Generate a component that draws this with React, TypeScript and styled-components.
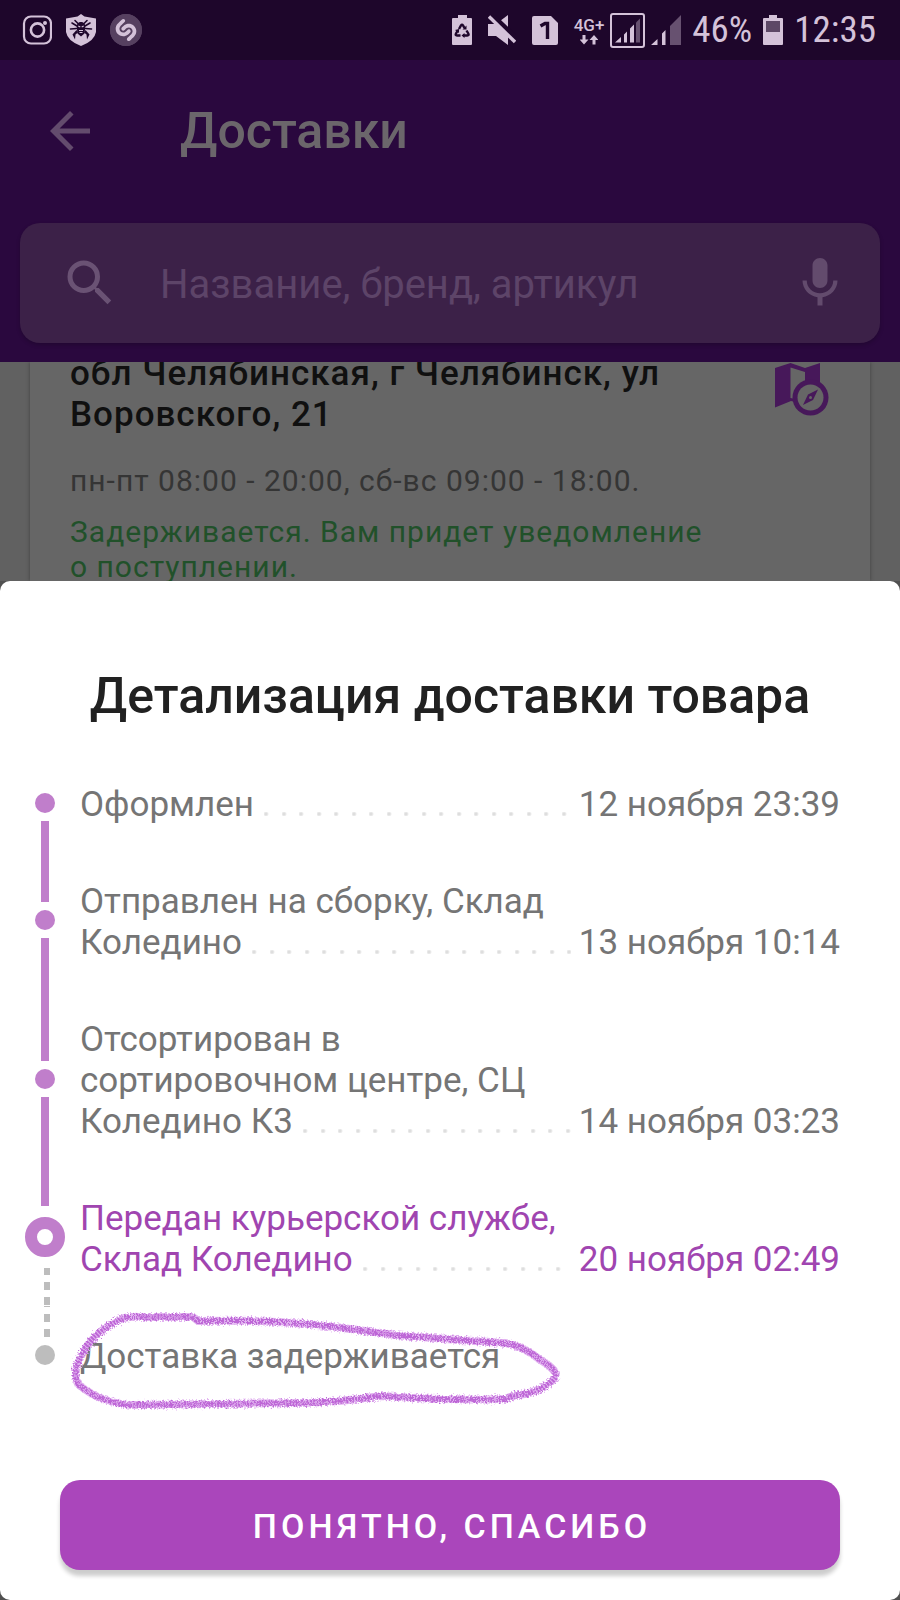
import React from 'react';
import styled, { createGlobalStyle, css } from 'styled-components';
import { MdArrowBack, MdMic, MdSearch } from 'react-icons/md';
import { SiShazam } from 'react-icons/si';

const GlobalStyle = createGlobalStyle`
  * { box-sizing: border-box; }
  body { margin: 0; background: #505050; font-family: Roboto, "Noto Sans", sans-serif; }
  h1, h2, h3, p, ol { margin: 0; padding: 0; }
  button, input { font-family: inherit; }
`;

const Screen = styled.div`
  display: flex;
  flex-direction: column;
  min-height: 100vh;
`;

const StatusBar = styled.div`
  display: flex;
  align-items: center;
  justify-content: space-between;
  height: 60px;
  padding: 0 24px 0 22px;
  background: #1e062b;
  color: #d4c2d9;
`;

const StatusGroup = styled.div<{ $gap: number }>`
  display: flex;
  align-items: center;
  gap: ${({ $gap }) => $gap}px;
`;

const StatusText = styled.span`
  font-family: "Roboto Condensed", Roboto, sans-serif;
  font-size: 37px;
  line-height: 40px;
`;

const NetworkType = styled.div`
  display: flex;
  flex-direction: column;
  align-items: center;
  font-size: 17px;
  font-weight: 500;
  line-height: 20px;
`;

const Header = styled.header`
  display: flex;
  flex-direction: column;
  gap: 57px;
  padding: 36px 20px 19px;
  background: #2a083e;
`;

const TitleRow = styled.div`
  display: flex;
  align-items: center;
  gap: 80px;
  height: 70px;
  padding-left: 20px;
`;

const IconButton = styled.button`
  display: flex;
  padding: 0;
  border: 0;
  background: none;
  color: #634b6d;
`;

const PageTitle = styled.h1`
  color: #6b666b;
  font-size: 50px;
  font-weight: 500;
  line-height: 60px;
`;

const SearchBox = styled.label`
  display: flex;
  align-items: center;
  gap: 40px;
  height: 120px;
  padding: 0 30px 0 40px;
  border-radius: 20px;
  background: #3c2148;
  box-shadow: 0 2px 4px rgba(0, 0, 0, 0.2);
  color: #6a5274;
`;

const SearchInput = styled.input`
  flex: 1;
  min-width: 0;
  padding: 4px 0 0;
  border: 0;
  outline: 0;
  background: none;
  color: #6a5274;
  font-size: 40px;
  line-height: 48px;
  &::placeholder { color: #5d4468; opacity: 1; }
`;

const Deliveries = styled.main`
  flex: 1 0 219px;
  height: 219px;
  overflow: hidden;
  padding: 0 30px;
  background: #616161;
`;

const DeliveryCard = styled.article`
  display: flex;
  align-items: flex-start;
  justify-content: space-between;
  height: 100%;
  padding: 0 40px;
  background: #666;
  box-shadow: 0 0 4px rgba(0, 0, 0, 0.35);
`;

const CardText = styled.div`
  display: flex;
  flex-direction: column;
  max-width: 640px;
  margin-top: -9px;
`;

const Address = styled.h2`
  color: #101010;
  font-size: 35px;
  font-weight: 500;
  line-height: 41px;
  letter-spacing: 1px;
`;

const Hours = styled.p`
  margin-top: 28px;
  color: #353535;
  font-size: 30px;
  line-height: 35px;
  letter-spacing: 1px;
`;

const DelayNote = styled(Hours)`
  margin-top: 16px;
  color: #21512a;
`;

const Sheet = styled.section`
  display: flex;
  flex-direction: column;
  padding: 85px 0 30px;
  border-radius: 10px;
  background: #fff;
`;

const SheetTitle = styled.h2`
  color: #212121;
  font-size: 50px;
  font-weight: 500;
  line-height: 60px;
  text-align: center;
`;

const Timeline = styled.ol`
  margin: 28px 60px 77px 25px;
  list-style: none;
`;

const Step = styled.li<{ $active?: boolean }>`
  display: flex;
  gap: 15px;
  color: ${({ $active }) => ($active ? '#a045b0' : '#757575')};
`;

const Rail = styled.div`
  display: flex;
  flex-direction: column;
  align-items: center;
  gap: 8px;
  width: 40px;
`;

type StepState = 'done' | 'current' | 'pending';
type LineKind = 'none' | 'solid' | 'dashDown' | 'dashUp';

const lineStyles = {
  none: css``,
  solid: css`background: #c07ecb;`,
  dashDown: css`
    width: 6px;
    margin-left: 4px;
    background: repeating-linear-gradient(
      to top,
      transparent 0 1px,
      #bdbdbd 1px 9px,
      transparent 9px 15px
    );
  `,
  dashUp: css`
    width: 6px;
    margin-left: 4px;
    background: repeating-linear-gradient(to top, #bdbdbd 0 8px, transparent 8px 15px);
  `,
};

const Line = styled.span<{ $kind: LineKind }>`
  flex: 1;
  width: 8px;
  ${({ $kind }) => lineStyles[$kind]}
`;

const Dot = styled.span<{ $state: StepState }>`
  width: 20px;
  height: 20px;
  border-radius: 50%;
  background: ${({ $state }) => ($state === 'pending' ? '#bdbdbd' : '#c07ecb')};
  ${({ $state }) =>
    $state === 'current' &&
    css`
      width: 40px;
      height: 40px;
      margin: 3px 0;
      border: 12px solid #c07ecb;
      background: #fff;
    `}
`;

const StepBody = styled.div`
  flex: 1;
  padding: 30px 0 26px;
  font-size: 35px;
  line-height: 41px;
`;

const LastLine = styled.div`
  display: flex;
  align-items: flex-end;
`;

const Leader = styled.span`
  flex: 1;
  height: 4px;
  margin: 0 8px 9px 10px;
  background:
    radial-gradient(circle at 2px 2px, #dedede 1px, transparent 3px) 0 0 / 35px 4px,
    radial-gradient(circle at 2px 2px, #dedede 1px, transparent 3px) 18px 0 / 35px 4px;
`;

const Circled = styled.span`
  position: relative;
`;

const Scribble = styled.svg`
  position: absolute;
  left: -9px;
  top: -31px;
  pointer-events: none;
`;

const ConfirmButton = styled.button`
  height: 90px;
  margin: 0 60px;
  padding: 2px 0 0 4px;
  border: 0;
  border-radius: 20px;
  background: #aa46bb;
  box-shadow: 0 6px 4px rgba(0, 0, 0, 0.2);
  color: #fff;
  font-size: 34px;
  font-weight: 500;
  line-height: 40px;
  letter-spacing: 4px;
  text-transform: uppercase;
`;

const ShazamBadge = styled.span`
  display: flex;
  border-radius: 50%;
  background: radial-gradient(circle, #d4c2d9 12px, #564060 13px);
  color: #564060;
`;

function InstagramIcon() {
  return (
    <svg width="30" height="30" viewBox="0 0 30 30" fill="none" stroke="currentColor">
      <rect x="2" y="1.500" width="27" height="27" rx="7" strokeWidth="2.200" />
      <circle cx="15.500" cy="15" r="6.600" strokeWidth="2.600" />
      <circle cx="23" cy="8" r="2" fill="currentColor" stroke="none" />
    </svg>
  );
}

function SpiderShieldIcon() {
  return (
    <svg width="30" height="32" viewBox="0 0 30 32">
      <path d="M15 0 18.500 2.600 30 4.500V18q-1.500 9-15 14Q1.500 27 0 18V4.500L11.500 2.600Z" fill="currentColor" />
      <g fill="none" stroke="#1e062b" strokeWidth="1.600" strokeLinecap="round">
        <path d="M12 9.500 9 6.500M18 9.500l3-3M11 12 6 9M19 12 24 9M10.500 14.500l-6 .5M19.500 14.500l6 .5" />
      </g>
      <path d="M10.500 16 6.500 20.500 9 25.500 9.500 20.500 12 18.500ZM19.500 16l4 4.500L21 25.500 20.500 20.500 18 18.500Z" fill="#1e062b" />
      <path d="M15 8c3.200 0 4.600 2.400 4.200 6L18.500 19.500 15 22.500 11.500 19.500 10.800 14C10.400 10.400 11.800 8 15 8Z" fill="#1e062b" />
      <path d="M12.300 12l2 1M17.700 12l-2 1M13 16.500h4M13.500 18.500h3" stroke="currentColor" strokeWidth="1.200" />
    </svg>
  );
}

function RecycleBatteryIcon() {
  return (
    <svg width="20" height="30" viewBox="0 0 20 30">
      <path d="M6 0h9v3h4q1 0 1 1v25q0 1-1 1H1q-1 0-1-1V4q0-1 1-1h5Z" fill="currentColor" />
      <g fill="none" stroke="#1e062b" strokeWidth="2.400">
        <path d="M7 14l2-3.500q1-1.500 2 0l1.500 2.500M14.500 15.500l1.800 3q1 2-1 2H11.500M8.500 20.500H5q-2 0-1-2L5.500 16" />
      </g>
      <path d="M14.500 10.500v4h-4ZM12.500 18v5l-3-2.500ZM3 15l4-1v4Z" fill="#1e062b" />
    </svg>
  );
}

function MutedIcon() {
  return (
    <svg width="28" height="30" viewBox="0 0 28 30">
      <path d="M0 9h8L20 0v30L8 21H0Z" fill="currentColor" />
      <path d="M2-2 30 25" stroke="#1e062b" strokeWidth="5" />
      <path d="M1 1.500 27 27" stroke="currentColor" strokeWidth="3.400" />
    </svg>
  );
}

function SimIcon() {
  return (
    <svg width="26" height="29" viewBox="0 0 26 29">
      <path d="M2 0h17l7 7v20q0 2-2 2H2q-2 0-2-2V2Q0 0 2 0Z" fill="currentColor" />
      <path d="M8.500 10 13 7.500h2.500V23" fill="none" stroke="#1e062b" strokeWidth="3.400" />
    </svg>
  );
}

function DataArrowsIcon() {
  return (
    <svg width="18" height="10" viewBox="0 0 18 10" fill="currentColor">
      <path d="M2.500 0h3v4.500H8.500L4 9.500-.5 4.500h3ZM12.500 9.500h3V5h3L14 0 9.500 5h3Z" />
    </svg>
  );
}

function BoxedSignalIcon() {
  return (
    <svg width="35" height="35" viewBox="0 0 35 35">
      <rect x="1" y="1" width="33" height="33" rx="2" fill="none" stroke="currentColor" strokeWidth="2" />
      <path d="M5 29.500 11 24v5.500ZM14 21.500l3-3v11h-3ZM20 15.500l4-4v18h-4Z" fill="currentColor" />
      <path d="M26 9.500l4-4v24h-4Z" fill="#675170" />
    </svg>
  );
}

function SignalIcon() {
  return (
    <svg width="30" height="30" viewBox="0 0 30 30">
      <path d="M0 30 6.500 24v6ZM11 18.500l3.500-3.500v15H11Z" fill="currentColor" />
      <path d="M19 11 30 0v30H19Z" fill="#675170" />
    </svg>
  );
}

function BatteryIcon() {
  return (
    <svg width="20" height="30" viewBox="0 0 20 30">
      <path d="M6 0h8v3h5q1 0 1 1v25q0 1-1 1H1q-1 0-1-1V4q0-1 1-1h5Z" fill="currentColor" />
      <path d="M3 6h14v11H3Z" fill="#5d4866" />
    </svg>
  );
}

const MapGlyph = styled.svg`
  flex: none;
  margin-right: 1px;
`;

function MapCompassIcon() {
  return (
    <MapGlyph width="54" height="54" viewBox="0 0 54 54" fill="none">
      <path d="M0 6 15.500 1 30 6 45 1V22H30V10L15.500 5.500V36l5 1v3L16 39 0 45.500Z" fill="#47185a" />
      <circle cx="35.500" cy="35.500" r="18" fill="#47185a" />
      <circle cx="35.500" cy="35.500" r="13" fill="#666" />
      <path d="M43 27.500 38 38 28 43 33 32.500Z" fill="#47185a" />
      <circle cx="35.500" cy="35.500" r="1.500" fill="#666" />
    </MapGlyph>
  );
}

function HandDrawnLoop() {
  const loop =
    'M14 44C20 34 36 20 46 16Q54 11 68 12L122 12 127 16C170 15 215 16 255 21C300 26 322 31 350 32Q400 36 434 38Q452 41 468 54Q488 66 484 72Q476 84 454 89Q442 90 434 94Q385 96 310 91Q270 97 230 98L60 100Q30 98 8 80Q-1 68 14 44Z';
  return (
    <Scribble width="496" height="108" viewBox="0 0 496 108" fill="none" aria-hidden="true">
      <defs>
        <filter id="crayon" x="-5%" y="-10%" width="110%" height="120%">
          <feTurbulence type="fractalNoise" baseFrequency="0.6" numOctaves="2" result="grain" />
          <feDisplacementMap in="SourceGraphic" in2="grain" scale="6" />
        </filter>
      </defs>
      <path d={loop} stroke="#e2b4f0" strokeWidth="8" strokeLinejoin="round" filter="url(#crayon)" />
      <path d={loop} stroke="#bd66d6" strokeWidth="6" strokeDasharray="2 1" filter="url(#crayon)" />
    </Scribble>
  );
}

interface StepData {
  lines: string[];
  date?: string;
  state: StepState;
  before: LineKind;
  after: LineKind;
}

const steps: StepData[] = [
  { lines: ['Оформлен'], date: '12 ноября 23:39', state: 'done', before: 'none', after: 'solid' },
  { lines: ['Отправлен на сборку, Склад', 'Коледино'], date: '13 ноября 10:14', state: 'done', before: 'solid', after: 'solid' },
  { lines: ['Отсортирован в', 'сортировочном центре, СЦ', 'Коледино К3'], date: '14 ноября 03:23', state: 'done', before: 'solid', after: 'solid' },
  { lines: ['Передан курьерской службе,', 'Склад Коледино'], date: '20 ноября 02:49', state: 'current', before: 'solid', after: 'dashDown' },
  { lines: ['Доставка задерживается'], state: 'pending', before: 'dashUp', after: 'none' },
];

function TimelineStep({ step }: { step: StepData }) {
  const head = step.lines.slice(0, -1);
  const last = step.lines[step.lines.length - 1];
  return (
    <Step $active={step.state === 'current'}>
      <Rail>
        <Line $kind={step.before} />
        <Dot $state={step.state} />
        <Line $kind={step.after} />
      </Rail>
      <StepBody>
        {head.map((line) => (
          <div key={line}>{line}</div>
        ))}
        <LastLine>
          {step.date ? (
            <>
              <span>{last}</span>
              <Leader />
              <time>{step.date}</time>
            </>
          ) : (
            <Circled>
              {last}
              <HandDrawnLoop />
            </Circled>
          )}
        </LastLine>
      </StepBody>
    </Step>
  );
}

export default function App() {
  return (
    <Screen>
      <GlobalStyle />
      <StatusBar>
        <StatusGroup $gap={14}>
          <InstagramIcon />
          <SpiderShieldIcon />
          <ShazamBadge>
            <SiShazam size={32} />
          </ShazamBadge>
        </StatusGroup>
        <StatusGroup $gap={11}>
          <StatusGroup $gap={16}>
            <RecycleBatteryIcon />
            <MutedIcon />
            <SimIcon />
            <StatusGroup $gap={6}>
              <NetworkType>
                4G+
                <DataArrowsIcon />
              </NetworkType>
              <BoxedSignalIcon />
              <SignalIcon />
            </StatusGroup>
          </StatusGroup>
          <StatusText>46%</StatusText>
          <BatteryIcon />
          <StatusText>12:35</StatusText>
        </StatusGroup>
      </StatusBar>
      <Header>
        <TitleRow>
          <IconButton type="button" aria-label="Назад">
            <MdArrowBack size={60} />
          </IconButton>
          <PageTitle>Доставки</PageTitle>
        </TitleRow>
        <SearchBox>
          <MdSearch size={60} />
          <SearchInput type="search" placeholder="Название, бренд, артикул" aria-label="Поиск" />
          <IconButton type="button" aria-label="Голосовой поиск">
            <MdMic size={60} />
          </IconButton>
        </SearchBox>
      </Header>
      <Deliveries>
        <DeliveryCard>
          <CardText>
            <Address>обл Челябинская, г Челябинск, ул Воровского, 21</Address>
            <Hours>пн-пт 08:00 - 20:00, сб-вс 09:00 - 18:00.</Hours>
            <DelayNote>Задерживается. Вам придет уведомление о поступлении.</DelayNote>
          </CardText>
          <MapCompassIcon />
        </DeliveryCard>
      </Deliveries>
      <Sheet role="dialog" aria-labelledby="sheet-title">
        <SheetTitle id="sheet-title">Детализация доставки товара</SheetTitle>
        <Timeline>
          {steps.map((step) => (
            <TimelineStep key={step.lines[0]} step={step} />
          ))}
        </Timeline>
        <ConfirmButton type="button">Понятно, спасибо</ConfirmButton>
      </Sheet>
    </Screen>
  );
}
